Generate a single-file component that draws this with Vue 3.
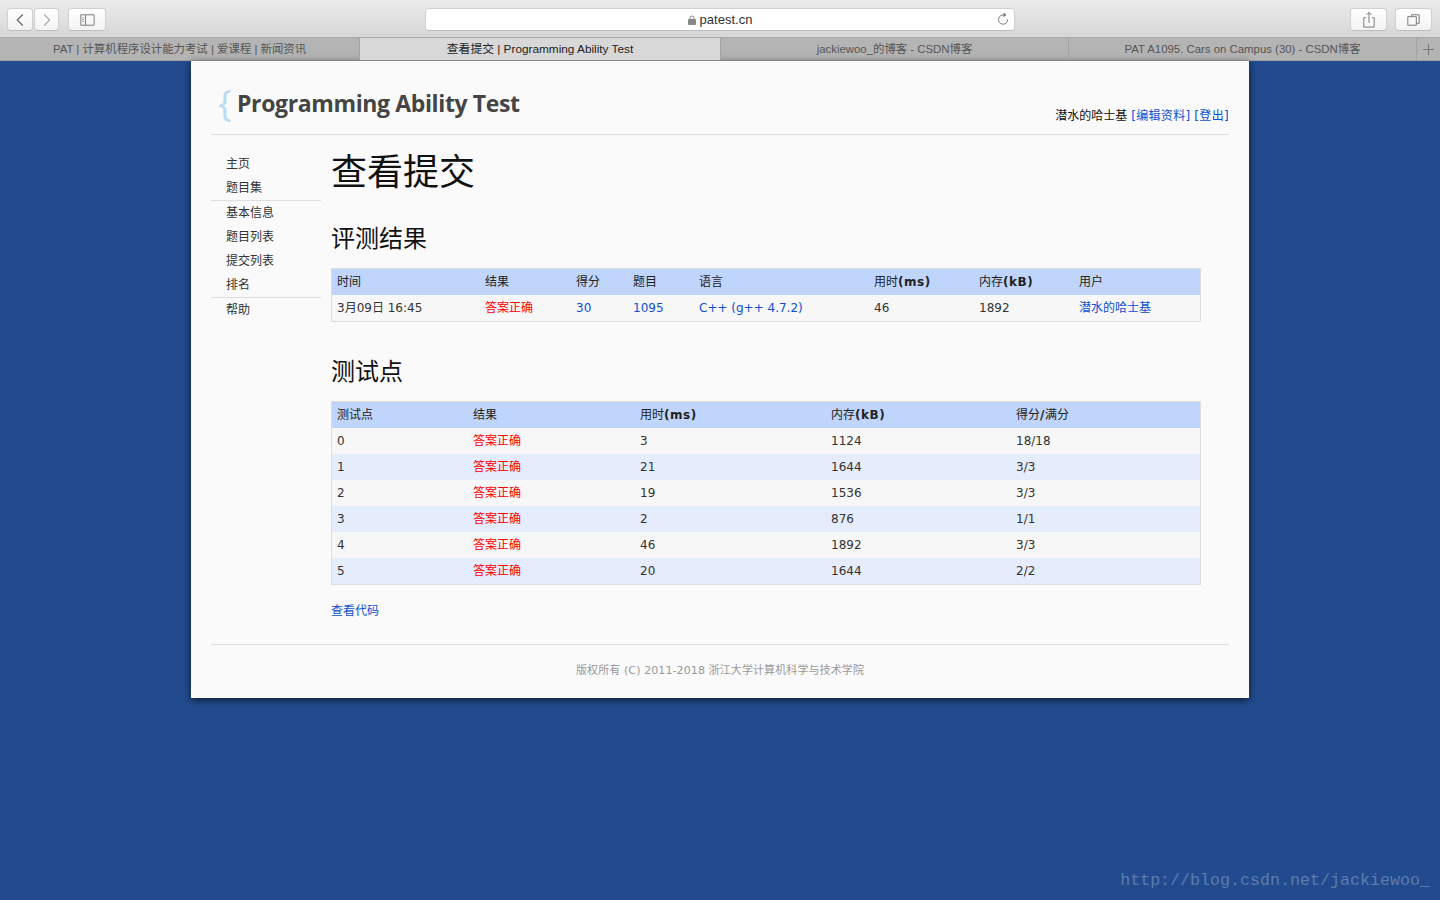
<script setup>
const tabs = [
  { title: 'PAT | 计算机程序设计能力考试 | 爱课程 | 新闻资讯', w: 360 },
  { title: '查看提交 | Programming Ability Test', w: 361, active: true },
  { title: 'jackiewoo_的博客 - CSDN博客', w: 348 },
  { title: 'PAT A1095. Cars on Campus (30) - CSDN博客', w: 348 }
]

const navGroups = [
  ['主页', '题目集'],
  ['基本信息', '题目列表', '提交列表', '排名'],
  ['帮助']
]

const cases = [
  ['0', '3', '1124', '18/18'],
  ['1', '21', '1644', '3/3'],
  ['2', '19', '1536', '3/3'],
  ['3', '2', '876', '1/1'],
  ['4', '46', '1892', '3/3'],
  ['5', '20', '1644', '2/2']
]
</script>

<template>
  <div class="screen">
    <div class="toolbar">
      <div class="btn nav-btn">
        <svg width="26" height="22" viewBox="0 0 26 22"><path d="M16 5l-6 6 6 6" fill="none" stroke="#666" stroke-width="1.3"/></svg>
      </div>
      <div class="btn nav-btn next">
        <svg width="25" height="22" viewBox="0 0 25 22"><path d="M10 5l6 6-6 6" fill="none" stroke="#aaa" stroke-width="1.3"/></svg>
      </div>
      <div class="btn side-btn">
        <svg width="38" height="22" viewBox="0 0 38 22"><path d="M12.500 5.500h14v11h-14zM17.500 5.500v11" fill="none" stroke="#777"/><path d="M14 8.500h2M14 10.500h2M14 12.500h2" stroke="#999"/></svg>
      </div>
      <div class="address">
        <svg class="lock" width="8" height="10" viewBox="0 0 8 10"><path d="M2 4V3a2 2 0 0 1 4 0v1" fill="none" stroke="#888"/><rect y="4" width="8" height="6" rx="1" fill="#888"/></svg>
        <span>patest.cn</span>
        <svg class="reload" width="12" height="14" viewBox="0 0 12 14"><path d="M7.500 3.200A4.600 4.600 0 1 0 10.700 7.500" fill="none" stroke="#777"/><path d="M6.500 0.500l3 2.500-3 2.300z" fill="#777"/></svg>
      </div>
      <div class="btn tool-btn share">
        <svg width="37" height="22" viewBox="0 0 37 22"><path d="M15.500 8.500h-2v10h11v-10h-2M19 14V3M16.500 5.500L19 3l2.500 2.500" fill="none" stroke="#777"/></svg>
      </div>
      <div class="btn tool-btn">
        <svg width="37" height="22" viewBox="0 0 37 22"><path d="M16.500 7.500v-2h8v9h-3M12.500 7.500h9v9h-9z" fill="none" stroke="#777"/></svg>
      </div>
    </div>

    <div class="tabbar">
      <div
        v-for="tab in tabs"
        :key="tab.title"
        class="tab"
        :class="{ 'tab-active': tab.active }"
        :style="{ width: tab.w + 'px' }"
      >{{ tab.title }}</div>
      <div class="tab-add">
        <svg width="11" height="11" viewBox="0 0 11 11"><path d="M5.500 0v11M0 5.500h11" stroke="#777"/></svg>
      </div>
    </div>

    <div class="card">
      <header class="head">
        <div class="brand"><span class="brace">{</span><span class="brand-name">Programming Ability Test</span></div>
        <div class="user">潜水的哈士基 <a>[编辑资料]</a> <a>[登出]</a></div>
      </header>

      <div class="body">
        <nav class="side">
          <ul v-for="(group, i) in navGroups" :key="i">
            <li v-for="item in group" :key="item">{{ item }}</li>
          </ul>
        </nav>

        <main class="main">
          <h1>查看提交</h1>
          <h2 class="first">评测结果</h2>
          <table class="result">
            <thead>
              <tr><th>时间</th><th>结果</th><th>得分</th><th>题目</th><th>语言</th><th>用时<b>(ms)</b></th><th>内存<b>(kB)</b></th><th>用户</th></tr>
            </thead>
            <tbody>
              <tr>
                <td>3月09日 16:45</td>
                <td class="ok">答案正确</td>
                <td><a>30</a></td>
                <td><a>1095</a></td>
                <td><a>C++ (g++ 4.7.2)</a></td>
                <td>46</td>
                <td>1892</td>
                <td><a>潜水的哈士基</a></td>
              </tr>
            </tbody>
          </table>

          <h2 class="second">测试点</h2>
          <table class="points">
            <thead>
              <tr><th>测试点</th><th>结果</th><th>用时<b>(ms)</b></th><th>内存<b>(kB)</b></th><th>得分<b>/</b>满分</th></tr>
            </thead>
            <tbody>
              <tr v-for="row in cases" :key="row[0]">
                <td>{{ row[0] }}</td>
                <td class="ok">答案正确</td>
                <td>{{ row[1] }}</td>
                <td>{{ row[2] }}</td>
                <td>{{ row[3] }}</td>
              </tr>
            </tbody>
          </table>

          <p class="code-link"><a>查看代码</a></p>
        </main>
      </div>

      <footer class="foot">版权所有 (C) 2011-2018 浙江大学计算机科学与技术学院</footer>
    </div>

    <div class="watermark">http://blog.csdn.net/jackiewoo_</div>
  </div>
</template>

<style scoped>
.screen {
  position: relative;
  width: 1440px;
  height: 900px;
  overflow: hidden;
  background: #224b8f;
  font-family: "DejaVu Sans", "Noto Sans CJK SC", sans-serif;
}

.toolbar {
  display: flex;
  box-sizing: border-box;
  height: 38px;
  padding: 8px 0 0 7px;
  background: linear-gradient(#ececec, #d6d6d6);
  border-bottom: 1px solid #a9a9a9;
}
.btn {
  display: flex;
  box-sizing: border-box;
  height: 23px;
  background: linear-gradient(#fff, #f3f3f3);
  border: 1px solid #d0d0d0;
  border-bottom-color: #bdbdbd;
  border-radius: 4px;
  justify-content: center;
  align-items: center;
}
.nav-btn { width: 26px; }
.next { margin-left: 1px; width: 25px; }
.side-btn { width: 38px; margin-left: 9px; }
.tool-btn { width: 37px; margin-left: 8px; }
.share { margin-left: 335px; }
.address {
  position: relative;
  display: flex;
  box-sizing: border-box;
  width: 590px;
  height: 23px;
  margin-left: 319px;
  background: #fff;
  border: 1px solid #d0d0d0;
  border-bottom-color: #bdbdbd;
  border-radius: 4px;
  font-family: "Liberation Sans", sans-serif;
  font-size: 13px;
  color: #333;
  justify-content: center;
  align-items: center;
  gap: 4px;
}
.reload { position: absolute; right: 5px; top: 3px; }

.tabbar {
  display: flex;
  box-sizing: border-box;
  height: 23px;
  background: #b4b4b4;
  border-bottom: 1px solid #a3a3a3;
}
.tab {
  box-sizing: border-box;
  border-right: 1px solid #a3a3a3;
  font-family: "Liberation Sans", "Noto Sans CJK SC", sans-serif;
  font-size: 11.4px;
  line-height: 22px;
  text-align: center;
  color: #555;
}
.tab-active {
  background: #d8d8d8;
  font-size: 11.8px;
  color: #222;
}
.tab-add {
  display: flex;
  flex: 1;
  justify-content: center;
  align-items: center;
}

.card {
  box-sizing: border-box;
  width: 1058px;
  height: 637px;
  margin-left: 191px;
  padding: 0 20px;
  background: #fafafa;
  box-shadow: 0 2px 8px rgba(0, 0, 0, 0.65);
  color: #333;
}

.head {
  display: flex;
  box-sizing: border-box;
  height: 74px;
  border-bottom: 1px solid #ddd;
  justify-content: space-between;
  align-items: flex-end;
}
.brand {
  display: flex;
  align-items: center;
  height: 46px;
  margin-bottom: 8px;
  padding-left: 7px;
}
.brace {
  width: 19px;
  font-family: "Open Sans", sans-serif;
  font-size: 36px;
  line-height: 46px;
  color: #b8daf2;
}
.brand-name {
  font-family: "Open Sans", sans-serif;
  font-size: 23px;
  font-weight: 700;
  letter-spacing: -0.37px;
  color: #444;
}
.user {
  margin-bottom: 9px;
  font-size: 12px;
  line-height: 18px;
  color: #111;
}
.user a { letter-spacing: 0.33px; }
a { color: #0d4fd0; }

.body { display: flex; }
.side {
  width: 110px;
  padding-top: 17px;
  font-size: 12px;
  color: #333;
}
.side ul {
  margin: 0;
  padding: 0;
  list-style: none;
  border-bottom: 1px solid #ddd;
}
.side ul:last-child { border-bottom: none; }
.side li {
  height: 24px;
  padding-left: 15px;
  line-height: 24px;
}

.main {
  width: 870px;
  margin-left: 10px;
}
h1, h2 {
  margin: 0;
  font-weight: 400;
  color: #111;
}
h1 {
  height: 72px;
  font-size: 36px;
  line-height: 76px;
}
h2 {
  font-size: 24px;
  line-height: 32px;
}
.first { margin: 16px 0 13px; }
.second { margin: 34px 0 13px; }

table {
  width: 870px;
  table-layout: fixed;
  border-collapse: separate;
  border-spacing: 0;
  border: 1px solid #ddd;
  font-size: 12px;
}
th, td {
  box-sizing: border-box;
  height: 26px;
  padding: 0 5px;
  line-height: 16px;
  text-align: left;
  font-weight: 400;
  background: #f7f7f7;
  color: #333;
}
th {
  font-size: 12px;
  background: #bfd5fb;
  color: #222;
}
th b {
  font-weight: 700;
  letter-spacing: 0.5px;
}
tbody tr:nth-child(even) td { background: #e5ecfb; }
.ok {
  font-size: 12px;
  color: #f00;
}

.result th:nth-child(1) { width: 148px; }
.result th:nth-child(2) { width: 91px; }
.result th:nth-child(3) { width: 57px; }
.result th:nth-child(4) { width: 66px; }
.result th:nth-child(5) { width: 175px; }
.result th:nth-child(6) { width: 105px; }
.result th:nth-child(7) { width: 100px; }

.points th:nth-child(1) { width: 136px; }
.points th:nth-child(2) { width: 167px; }
.points th:nth-child(3) { width: 191px; }
.points th:nth-child(4) { width: 185px; }

.code-link {
  margin: 17px 0 0;
  font-size: 12px;
  line-height: 18px;
}

.foot {
  margin-top: 24px;
  border-top: 1px solid #ddd;
  padding-top: 18px;
  font-size: 11px;
  line-height: 16px;
  letter-spacing: 0.1px;
  text-align: center;
  color: #999;
}

.watermark {
  position: absolute;
  right: 10px;
  bottom: 7px;
  font-family: "Liberation Mono", monospace;
  font-size: 16.67px;
  line-height: 24px;
  color: #5c7bab;
}
</style>

<style>
body { background: #224b8f; }
</style>
